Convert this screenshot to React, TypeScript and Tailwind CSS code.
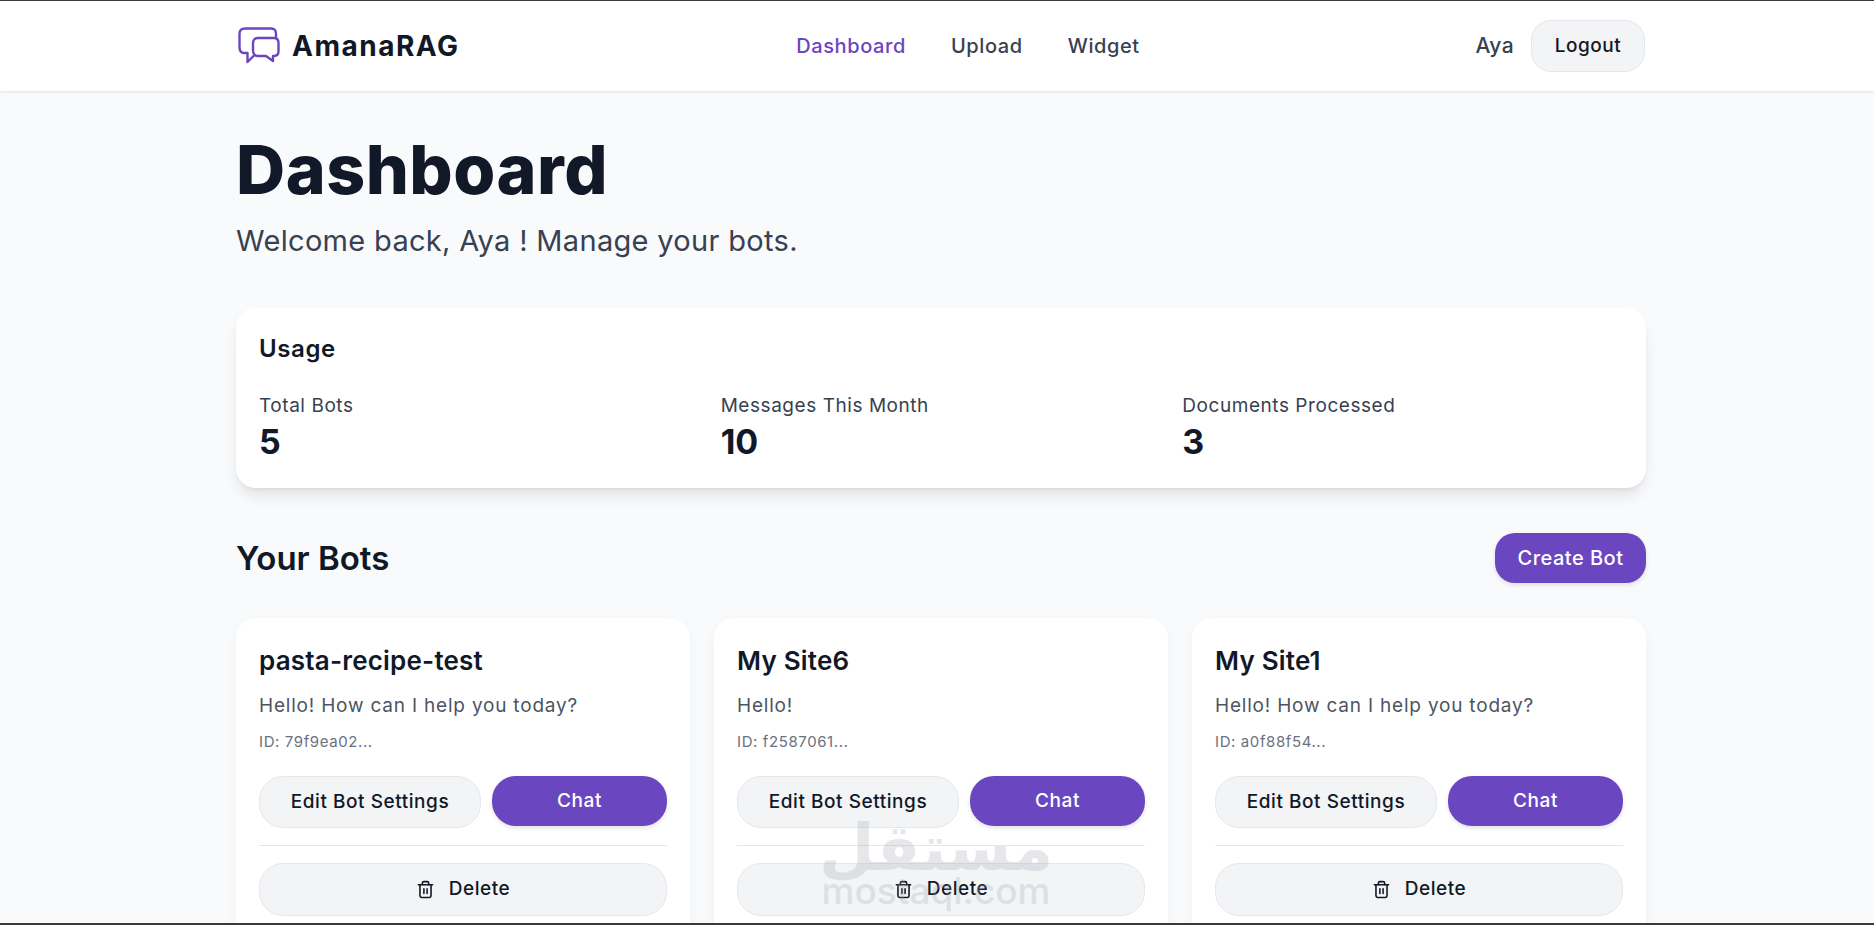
import { Trash2 } from "lucide-react";

const bots = [
  { name: "pasta-recipe-test", greeting: "Hello! How can I help you today?", id: "79f9ea02..." },
  { name: "My Site6", greeting: "Hello!", id: "f2587061..." },
  { name: "My Site1", greeting: "Hello! How can I help you today?", id: "a0f88f54..." },
];

const stats = [
  { label: "Total Bots", value: "5" },
  { label: "Messages This Month", value: "10" },
  { label: "Documents Processed", value: "3" },
];

const Logo = () => (
  <svg width="42" height="38" viewBox="0 0 42 38" fill="none" stroke="#6b46c1" strokeWidth="2.4" strokeLinejoin="round" strokeLinecap="round">
    <path d="M38 10V7C38 3 36 1.5 33 1.5H7C3 1.5 1.5 3.5 1.5 7V20C1.5 24 3 26 6 26H9.5V35L16.5 28" />
    <path d="M20 11H36C39 11 40.5 13 40.5 16V24C40.5 27 39 29 36 29H35V34L28 29H20C17 29 15 27 15 24V16C15 13 17 11 20 11Z" />
  </svg>
);

const BotCard = ({ name, greeting, id }: { name: string; greeting: string; id: string }) => (
  <div className="bg-white rounded-[20px] shadow-[0_4px_14px_rgba(17,24,39,0.04)] px-[23px] pt-[25px] pb-[23px]">
    <h3 className="text-[26px] leading-[36px] font-semibold tracking-[0.2px] text-[#111827]">{name}</h3>
    <p className="mt-[13px] text-[19px] leading-[28px] tracking-[0.8px] text-[#4b5563]">{greeting}</p>
    <p className="mt-[10px] text-[15px] leading-[24px] tracking-[0.6px] text-[#6b7280]">ID: {id}</p>
    <div className="mt-[22px] flex items-start gap-[11px]">
      <button className="flex-1 h-[52px] rounded-[24px] bg-[#f3f4f6] border border-[#e5e7eb] text-[19px] font-medium tracking-[0.55px] text-[#111827]">Edit Bot Settings</button>
      <button className="w-[175px] h-[50px] rounded-[24px] bg-[#6b46c1] text-[19px] font-medium tracking-[0.55px] text-white shadow-[0_2px_4px_rgba(17,24,39,0.12)]">Chat</button>
    </div>
    <div className="mt-[17px] pt-[17px] border-t border-[#e5e7eb]">
      <button className="w-full h-[53px] rounded-[24px] bg-[#f3f4f6] border border-[#e5e7eb] flex items-center justify-center gap-[14px] text-[19px] font-medium tracking-[0.5px] text-[#111827]">
        <Trash2 size={19} strokeWidth={2} />
        Delete
      </button>
    </div>
  </div>
);

export default function App() {
  return (
    <div className="relative h-[925px] overflow-hidden bg-[#f9fafb] font-['Inter',sans-serif] border-t border-b-2 border-[#3a3a3a]">
      <header className="bg-white h-[90px] shadow-[0_1px_3px_rgba(17,24,39,0.1)]">
        <div className="ml-[236px] w-[1410px] h-full flex items-center justify-between">
          <div className="flex items-center gap-[12px] ml-[2px] w-[482px]">
            <Logo />
            <span className="text-[28px] font-bold tracking-[1.5px] text-[#111827]">AmanaRAG</span>
          </div>
          <nav className="flex items-center gap-[45px] text-[20px] font-medium tracking-[0.6px] text-[#374151]">
            <span className="text-[#6b46c1]">Dashboard</span>
            <span>Upload</span>
            <span>Widget</span>
          </nav>
          <div className="flex items-center justify-end gap-[17px] w-[430px] pr-[1px]">
            <span className="text-[21px] font-medium tracking-[0.4px] text-[#374151]">Aya</span>
            <button className="h-[52px] w-[114px] rounded-[20px] bg-[#f3f4f6] border border-[#e5e7eb] text-[19px] font-medium tracking-[0.5px] text-[#111827]">Logout</button>
          </div>
        </div>
      </header>

      <main className="ml-[236px] w-[1410px]">
        <h1 className="mt-[36px] text-[68px] leading-[84px] font-extrabold tracking-[0.5px] text-[#111827]">Dashboard</h1>
        <p className="mt-[8px] text-[29px] leading-[44px] tracking-[0.32px] text-[#374151]">Welcome back, Aya ! Manage your bots.</p>

        <section className="mt-[45px] bg-white rounded-[20px] shadow-[0_10px_15px_-3px_rgba(17,24,39,0.1),0_4px_6px_-4px_rgba(17,24,39,0.1)] px-[23px] pt-[23px] h-[180px]">
          <h2 className="text-[24px] leading-[36px] font-semibold tracking-[0.6px] text-[#111827]">Usage</h2>
          <div className="mt-[25px] grid grid-cols-3 gap-[21px]">
            {stats.map((s) => (
              <div key={s.label}>
                <p className="text-[19px] leading-[28px] tracking-[0.55px] text-[#374151]">{s.label}</p>
                <p className="text-[34px] leading-[44px] font-bold text-[#111827]">{s.value}</p>
              </div>
            ))}
          </div>
        </section>

        <div className="mt-[45px] flex items-center justify-between">
          <h2 className="text-[33px] leading-[50px] font-semibold text-[#111827]">Your Bots</h2>
          <button className="h-[50px] w-[151px] rounded-[20px] bg-[#6b46c1] text-[20px] font-medium tracking-[0.5px] text-white shadow-[0_2px_4px_rgba(17,24,39,0.12)]">Create Bot</button>
        </div>

        <div className="mt-[35px] grid grid-cols-3 gap-[24px]">
          {bots.map((b) => (
            <BotCard key={b.name} {...b} />
          ))}
        </div>
      </main>

      <div className="absolute left-[820px] top-[822px] w-[232px] flex flex-col items-center text-[#9ca3af] opacity-25 pointer-events-none">
        <span className="text-[64px] leading-[50px] font-bold font-['DejaVu_Sans',sans-serif]">مستقل</span>
        <span className="text-[37px] leading-[36px] font-medium">mostaql.com</span>
      </div>
    </div>
  );
}
